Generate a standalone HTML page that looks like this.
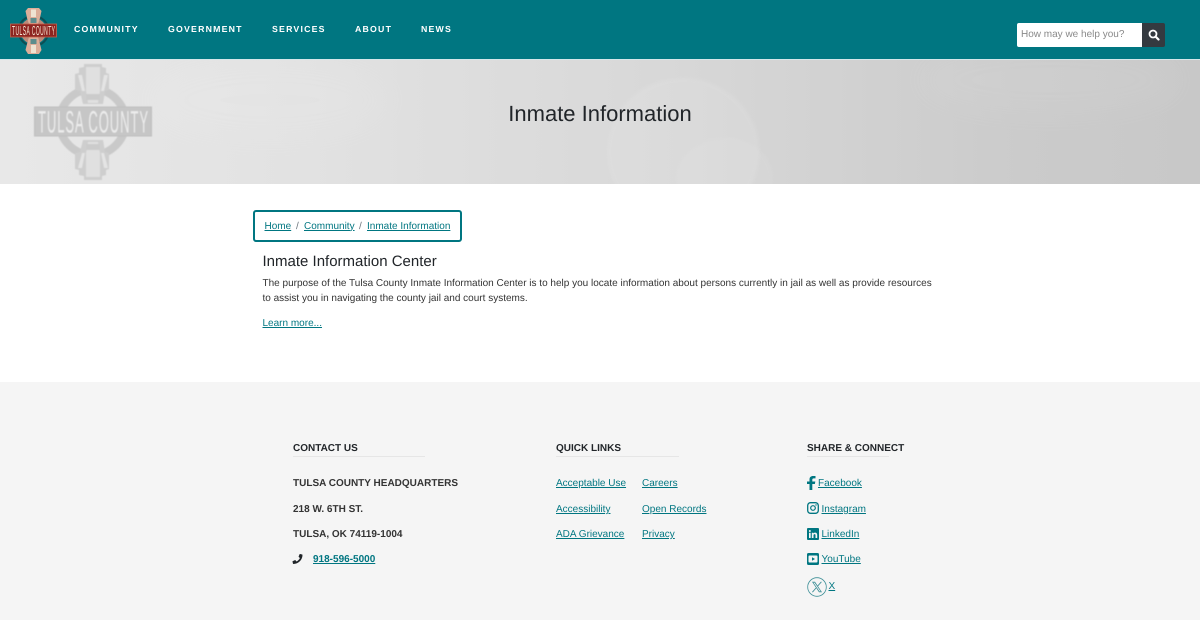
<!DOCTYPE html>
<html lang="en"><head><meta charset="utf-8"><title>Inmate Information</title>
<style>
*{box-sizing:border-box}
html,body{margin:0;padding:0}
body{width:1200px;height:620px;overflow:hidden;position:relative;background:#fff;font-family:"Liberation Sans",Arial,sans-serif;color:#212529;text-rendering:geometricPrecision}
a{color:#007681}
.abs{position:absolute;white-space:nowrap;line-height:16px}
#hdr{position:absolute;left:0;top:0;width:1200px;height:59px;background:#007681}
#hdr .n{position:absolute;top:20.500px;font-size:8.75px;line-height:16px;font-weight:700;letter-spacing:1.2px;color:#fff;white-space:nowrap}
#hero{position:absolute;left:0;top:59px;width:1200px;height:125px;overflow:hidden;background:linear-gradient(90deg,#e8e8e8 0,#e2e2e2 25%,#d8d8d8 55%,#cbcbcb 85%,#c8c8c8 100%);border-top:1px solid #d5e6e9}
#hero h1{position:absolute;left:0;width:1200px;top:39px;margin:0;text-align:center;font-size:22px;line-height:29px;font-weight:400;color:#212529}
#crumb{position:absolute;left:253px;top:210px;width:209px;height:32px;border:2px solid #007681;border-radius:3px;background:#fff}
.f{font-size:10px}
#foot{position:absolute;left:0;top:382px;width:1200px;height:238px;background:#f5f5f5}
.h{font-size:10px;font-weight:700;color:#212529}
.rule{position:absolute;height:1px;background:#e6e6e6}
.b{font-size:10px;font-weight:700;color:#333}
</style></head><body>
<div id="hdr">
<svg style="position:absolute;left:8px;top:6px;filter:blur(.3px)" width="52" height="50" viewBox="0 0 52 50">
<circle cx="25.500" cy="25" r="13" fill="#b98a7a"/>
<circle cx="25.500" cy="25" r="15" fill="none" stroke="#0b4f55" stroke-width="2"/>
<path d="M19 12L17.500 5L20 2H31L33.500 5L32 12L30 18H21Z" fill="#dcae99"/>
<path d="M19 38L17.500 44L20 48H31L33.500 44L32 38L30 31H21Z" fill="#dcae99"/>
<path d="M23 3.500H28V11H23ZM23 39H28V47H23Z" fill="#eee3d2"/>
<rect x="22.500" y="12" width="6" height="5" fill="#5c8d8d"/><rect x="22.500" y="33" width="6" height="5" fill="#5c8d8d"/>
<rect x="2.500" y="18" width="46" height="13" fill="#8d2420" stroke="#c8604a" stroke-width=".8"/>
<text transform="translate(25.500 29.200) scale(.38 1)" x="0" y="0" text-anchor="middle" font-family="Liberation Sans" font-size="13" fill="#f7e6d2" textLength="113" lengthAdjust="spacing">TULSA COUNTY</text>
</svg>
<div class="n" style="left:74px">COMMUNITY</div>
<div class="n" style="left:168px">GOVERNMENT</div>
<div class="n" style="left:272px">SERVICES</div>
<div class="n" style="left:355px">ABOUT</div>
<div class="n" style="left:421px">NEWS</div>
<div style="position:absolute;left:1017px;top:23px;width:125px;height:24px;background:#fff;border-radius:2px 0 0 2px;color:#8a8a8a;font-size:10px;line-height:24px;padding-left:4px;white-space:nowrap">How may we help you?</div>
<div style="position:absolute;left:1142px;top:23px;width:23px;height:24px;background:#343a40;border-radius:0 2px 2px 0">
<svg style="position:absolute;left:6px;top:6px" width="12" height="12" viewBox="0 0 12 12"><circle cx="5" cy="5" r="3.500" fill="none" stroke="#fff" stroke-width="1.800"/><path d="M7.600 7.600L10.500 10.500" stroke="#fff" stroke-width="2.200" stroke-linecap="round"/></svg>
</div>
</div>
<div id="hero">
<svg style="position:absolute;left:0;top:0" width="1200" height="125" viewBox="0 0 1200 125">
<defs>
<filter id="bl" x="-10%" y="-10%" width="120%" height="120%"><feGaussianBlur stdDeviation="1.500"/></filter>
<filter id="b2" x="-50%" y="-100%" width="200%" height="300%"><feGaussianBlur stdDeviation="14"/></filter>
<filter id="b3"><feGaussianBlur stdDeviation=".4"/></filter>
</defs>
<ellipse cx="683" cy="92" rx="76" ry="74" fill="#fff" opacity=".09" filter="url(#bl)"/>
<ellipse cx="725" cy="118" rx="48" ry="40" fill="#fff" opacity=".05" filter="url(#bl)"/>
<ellipse cx="270" cy="40" rx="120" ry="40" fill="#fff" opacity=".06" filter="url(#b2)"/>
<ellipse cx="1050" cy="20" rx="130" ry="35" fill="#fff" opacity=".05" filter="url(#b2)"/>
<g filter="url(#b3)">
<circle cx="92.500" cy="62" r="33" fill="none" stroke="#c9c9c9" stroke-width="8"/>
<path d="M83 44L80 31L75 30V14L79 13V8L84 7V4H102V7L106 8V13L109 14V30L105 31L103 44Z" fill="#cecece"/>
<path d="M86 7H100V31L98 43H88L86 31Z" fill="#e0e0e0"/>
<path d="M78 15H82L85 31H82ZM108 15H104L101 31H104Z" fill="#e4e4e4"/>
<rect x="86" y="34" width="14" height="6" fill="#cbcbcb"/>
<path d="M83 80L80 92L75 93V109L79 110V115L84 116V120H102V116L106 115V110L109 109V93L105 92L103 80Z" fill="#cecece"/>
<path d="M86 117H100V93L98 82H88L86 93Z" fill="#e0e0e0"/>
<path d="M78 108H82L85 93H82ZM108 108H104L101 93H104Z" fill="#e4e4e4"/>
<rect x="86" y="84" width="14" height="6" fill="#cbcbcb"/>
<rect x="34.500" y="47" width="117" height="29" fill="#c6c6c6" stroke="#bfbfbf"/>
<text transform="translate(93 72.500) scale(.42 1)" x="0" y="0" text-anchor="middle" font-family="Liberation Sans" font-size="31" fill="#ececec" textLength="262" lengthAdjust="spacing">TULSA COUNTY</text>
</g>
</svg>
<h1>Inmate Information</h1>
</div>

<div id="crumb"></div>
<a class="abs f" style="left:264.500px;top:218.500px" href="#">Home</a>
<span class="abs f" style="left:296px;top:218.500px;color:#6c757d">/</span>
<a class="abs f" style="left:304px;top:218.500px" href="#">Community</a>
<span class="abs f" style="left:359px;top:218.500px;color:#6c757d">/</span>
<a class="abs f" style="left:367px;top:218.500px" href="#">Inmate Information</a>

<div class="abs" style="left:262.500px;top:252.500px;font-size:15px;line-height:18px">Inmate Information Center</div>
<div class="abs f" style="left:262.500px;top:276px;color:#333">The purpose of the Tulsa County Inmate Information Center is to help you locate information about persons currently in jail as well as provide resources</div>
<div class="abs f" style="left:262.500px;top:291px;color:#333">to assist you in navigating the county jail and court systems.</div>
<a class="abs f" style="left:262.500px;top:316px" href="#">Learn more...</a>

<div id="foot"></div>
<div class="abs h" style="left:293px;top:441px">CONTACT US</div>
<div class="rule" style="left:293px;top:456px;width:132px"></div>
<div class="abs b" style="left:293px;top:476px">TULSA COUNTY HEADQUARTERS</div>
<div class="abs b" style="left:293px;top:502px">218 W. 6TH ST.</div>
<div class="abs b" style="left:293px;top:527px">TULSA, OK 74119-1004</div>
<svg style="position:absolute;left:292px;top:554px" width="11" height="10" viewBox="0 0 512 512"><path fill="#212529" d="M493 24L389 0c-11-3-23 3-27 14l-48 112c-4 10-1 21 7 28l60 50c-36 77-99 140-177 177l-50-60c-7-8-18-11-28-7L14 362c-11 5-17 17-14 28l24 104c3 11 12 18 23 18 256 0 465-208 465-465 0-11-8-20-19-23z"/></svg>
<a class="abs b" style="left:313px;top:552px;color:#007681" href="#">918-596-5000</a>

<div class="abs h" style="left:556px;top:441px">QUICK LINKS</div>
<div class="rule" style="left:556px;top:456px;width:123px"></div>
<a class="abs f" style="left:556px;top:476px" href="#">Acceptable Use</a>
<a class="abs f" style="left:642px;top:476px" href="#">Careers</a>
<a class="abs f" style="left:556px;top:502px" href="#">Accessibility</a>
<a class="abs f" style="left:642px;top:502px" href="#">Open Records</a>
<a class="abs f" style="left:556px;top:527px" href="#">ADA Grievance</a>
<a class="abs f" style="left:642px;top:527px" href="#">Privacy</a>

<div class="abs h" style="left:807px;top:441px">SHARE &amp; CONNECT</div>
<div class="rule" style="left:807px;top:456px;width:82px"></div>
<svg style="position:absolute;left:807px;top:476px" width="9" height="14" viewBox="0 0 9 14"><path fill="#007681" d="M2.500 14V8H0V5.500H2.500V3.500C2.500 1 4 0 6 0H8.500V2.400H6.800C5.700 2.400 5.300 2.900 5.300 3.800V5.500H8.300L7.900 8H5.300V14Z"/></svg>
<a class="abs f" style="left:818px;top:476px" href="#">Facebook</a>
<svg style="position:absolute;left:807px;top:502px" width="12" height="12" viewBox="0 0 12 12"><rect x=".7" y=".7" width="10.600" height="10.600" rx="2.800" fill="none" stroke="#007681" stroke-width="1.300"/><circle cx="6" cy="6" r="2.300" fill="none" stroke="#007681" stroke-width="1.200"/><circle cx="9" cy="3" r=".7" fill="#007681"/></svg>
<a class="abs f" style="left:821.500px;top:502px" href="#">Instagram</a>
<svg style="position:absolute;left:807px;top:527.500px" width="12" height="12" viewBox="0 0 12 12"><rect width="12" height="12" rx="1" fill="#007681"/><path fill="#f5f5f5" d="M2 4.800H3.700V10H2ZM2.850 2A1 1 0 1 1 2.850 4A1 1 0 1 1 2.850 2ZM4.800 4.800H6.400V5.500C6.800 4.900 7.400 4.650 8.100 4.650C9.500 4.650 10.200 5.500 10.200 7V10H8.500V7.300C8.500 6.500 8.200 6.100 7.600 6.100C6.900 6.100 6.500 6.600 6.500 7.400V10H4.800Z"/></svg>
<a class="abs f" style="left:821.500px;top:527px" href="#">LinkedIn</a>
<svg style="position:absolute;left:807px;top:553px" width="12" height="12" viewBox="0 0 12 12"><rect width="12" height="12" rx="1.500" fill="#007681"/><rect x="1.500" y="2.500" width="9" height="7" rx="1" fill="#f5f5f5"/><path d="M5 4.200L8 6L5 7.800Z" fill="#007681"/></svg>
<a class="abs f" style="left:821.500px;top:552px" href="#">YouTube</a>
<svg style="position:absolute;left:807px;top:577px" width="20" height="20" viewBox="0 0 20 20"><circle cx="10" cy="10" r="9.300" fill="none" stroke="#3d8f97" stroke-width=".8"/><path d="M5 4.800H8L15 15.200H12ZM6.400 5.600L12.500 14.400H13.600L7.500 5.600Z" fill="#3d8f97" fill-rule="evenodd"/><path d="M14.400 4.800L10.700 9M9 11L5.400 15.200" stroke="#3d8f97" stroke-width=".9" fill="none"/></svg>
<a class="abs f" style="left:828.500px;top:579px" href="#">X</a>
</body></html>
